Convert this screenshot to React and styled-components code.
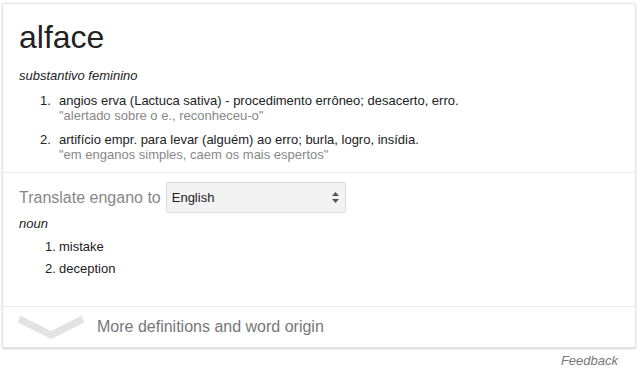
import React from 'react';
import styled, { createGlobalStyle } from 'styled-components';

const GlobalStyle = createGlobalStyle`
  body {
    margin: 0;
    background: #fff;
    font-family: "Liberation Sans", Arial, sans-serif;
    color: #222;
  }
`;

const Page = styled.div`
  padding: 3px 4px 0 2px;
  width: 640px;
  box-sizing: border-box;
`;

const Card = styled.div`
  border: 1px solid #e4e4e4;
  border-radius: 2px;
  box-shadow: 0 1px 2px rgba(0, 0, 0, 0.18);
  background: #fff;
`;

const Section = styled.div`
  padding: ${(p) => p.pad};
  border-bottom: ${(p) => (p.divided ? '1px solid #ebebeb' : 'none')};
`;

const Title = styled.div`
  font-size: 32px;
  line-height: 38px;
  color: #222;
`;

const Pos = styled.div`
  font-size: 13px;
  font-style: italic;
  color: #222;
  line-height: 16px;
  margin-top: ${(p) => p.top || 0}px;
`;

const DefList = styled.ol`
  margin: 0;
  padding: 0 0 0 ${(p) => p.indent}px;
  list-style: none;
`;

const DefItem = styled.li`
  display: flex;
  font-size: 13px;
  line-height: 15px;
  margin-top: ${(p) => p.gap}px;
`;

const Num = styled.span`
  width: ${(p) => p.w}px;
  flex-shrink: 0;
`;

const Example = styled.div`
  color: #878787;
`;

const TranslateRow = styled.div`
  display: flex;
  align-items: center;
  gap: 5px;
`;

const TranslateLabel = styled.span`
  font-size: 16px;
  color: #878787;
`;

const Select = styled.div`
  width: 180px;
  height: 31px;
  box-sizing: border-box;
  border: 1px solid #dcdcdc;
  border-radius: 2px;
  background: #f2f2f2;
  display: flex;
  align-items: center;
  justify-content: space-between;
  padding: 0 5px 0 5px;
  font-size: 13px;
  color: #222;
`;

const Footer = styled.div`
  display: flex;
  align-items: center;
  height: 40px;
  padding-left: 14px;
  gap: 12px;
`;

const MoreText = styled.span`
  font-size: 16px;
  color: #777;
`;

const FeedbackRow = styled.div`
  display: flex;
  justify-content: flex-end;
  padding: 5px 18px 0 0;
`;

const Feedback = styled.span`
  font-size: 13px;
  font-style: italic;
  color: #777;
`;

const Arrows = () => (
  <svg width="9" height="13" viewBox="0 0 9 13">
    <path d="M4.5 1 L8 5 L1 5 Z" fill="#555" />
    <path d="M4.5 12 L8 8 L1 8 Z" fill="#555" />
  </svg>
);

const Chevron = () => (
  <svg width="68" height="24" viewBox="0 0 68 24">
    <path d="M2 4 L34 20 L66 4" fill="none" stroke="#e3e3e3" strokeWidth="7" />
  </svg>
);

const senses = [
  {
    text: 'angios erva (Lactuca sativa) - procedimento errôneo; desacerto, erro.',
    example: '"alertado sobre o e., reconheceu-o"',
  },
  {
    text: 'artifício empr. para levar (alguém) ao erro; burla, logro, insídia.',
    example: '"em enganos simples, caem os mais espertos"',
  },
];

export default function App() {
  return (
    <>
      <GlobalStyle />
      <Page>
        <Card>
          <Section pad="14px 16px 10px 16px" divided>
            <Title>alface</Title>
            <Pos top={12}>substantivo feminino</Pos>
            <DefList indent={21}>
              {senses.map((s, i) => (
                <DefItem key={i} gap={i === 0 ? 9 : 9}>
                  <Num w={19}>{i + 1}.</Num>
                  <div>
                    <div>{s.text}</div>
                    <Example>{s.example}</Example>
                  </div>
                </DefItem>
              ))}
            </DefList>
          </Section>
          <Section pad="9px 16px 30px 16px" divided>
            <TranslateRow>
              <TranslateLabel>Translate engano to</TranslateLabel>
              <Select>
                <span>English</span>
                <Arrows />
              </Select>
            </TranslateRow>
            <Pos top={3}>noun</Pos>
            <DefList indent={26}>
              {['mistake', 'deception'].map((w, i) => (
                <DefItem key={w} gap={7}>
                  <Num w={14}>{i + 1}.</Num>
                  <span>{w}</span>
                </DefItem>
              ))}
            </DefList>
          </Section>
          <Footer>
            <Chevron />
            <MoreText>More definitions and word origin</MoreText>
          </Footer>
        </Card>
        <FeedbackRow>
          <Feedback>Feedback</Feedback>
        </FeedbackRow>
      </Page>
    </>
  );
}
